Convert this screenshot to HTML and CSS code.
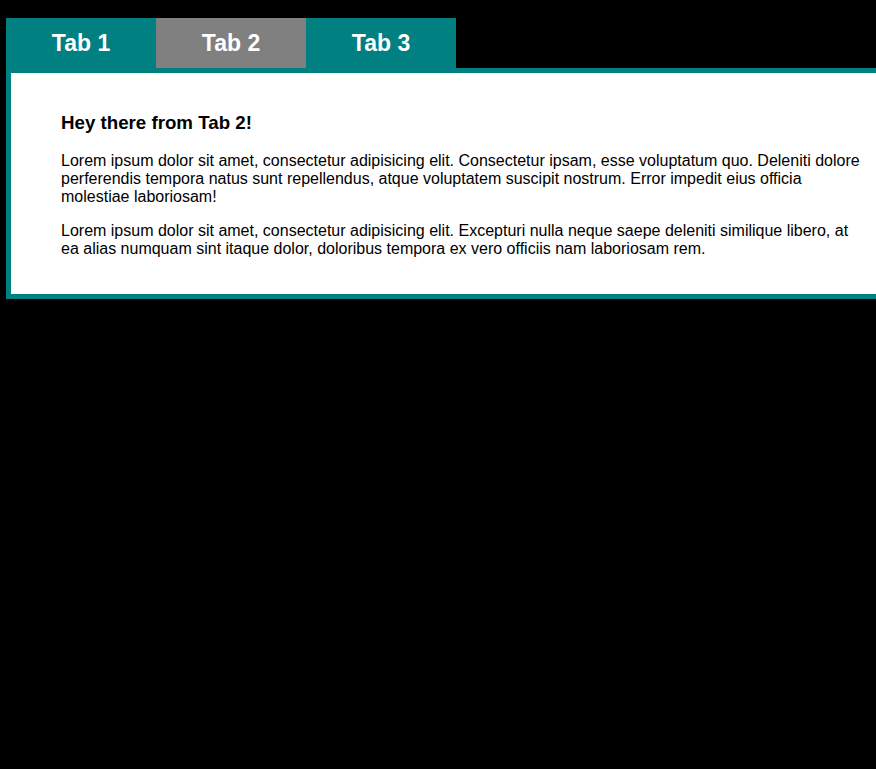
FILE: index.html
```html
<!DOCTYPE html>
<html>
<head>
<meta charset="utf-8">
<link rel="stylesheet" href="styles.css">
</head>
<body>
<div class="tabs">
  <div class="tab-bar">
    <div class="tab">Tab 1</div>
    <div class="tab active">Tab 2</div>
    <div class="tab">Tab 3</div>
  </div>
  <div class="panel">
    <h3 class="panel-title">Hey there from Tab 2!</h3>
    <p class="panel-text">Lorem ipsum dolor sit amet, consectetur adipisicing elit. Consectetur ipsam, esse voluptatum quo. Deleniti dolore perferendis tempora natus sunt repellendus, atque voluptatem suscipit nostrum. Error impedit eius officia molestiae laboriosam!</p>
    <p class="panel-text">Lorem ipsum dolor sit amet, consectetur adipisicing elit. Excepturi nulla neque saepe deleniti similique libero, at ea alias numquam sint itaque dolor, doloribus tempora ex vero officiis nam laboriosam rem.</p>
  </div>
</div>
</body>
</html>
```
FILE: styles.css
```css
html {
  background: #000;
}
body {
  margin: 18px 0 6px 6px;
  font-family: "Liberation Sans", Arial, sans-serif;
  color: #000;
  overflow-x: clip;
}
.tab-bar {
  display: flex;
}
.tab {
  width: 150px;
  height: 50px;
  background: #008080;
  color: #fff;
  font-weight: bold;
  font-size: 23px;
  display: flex;
  align-items: center;
  justify-content: center;
}
.tab.active {
  background: #808080;
}
.panel {
  background: #fff;
  border: 5px solid #008080;
  padding: 20px 50px 20px 50px;
  width: 800px;
}
.panel-title {
  font-size: 18.72px;
  margin: 18.72px 0;
}
.panel-text {
  font-size: 16px;
  margin: 16px 0;
}
```
